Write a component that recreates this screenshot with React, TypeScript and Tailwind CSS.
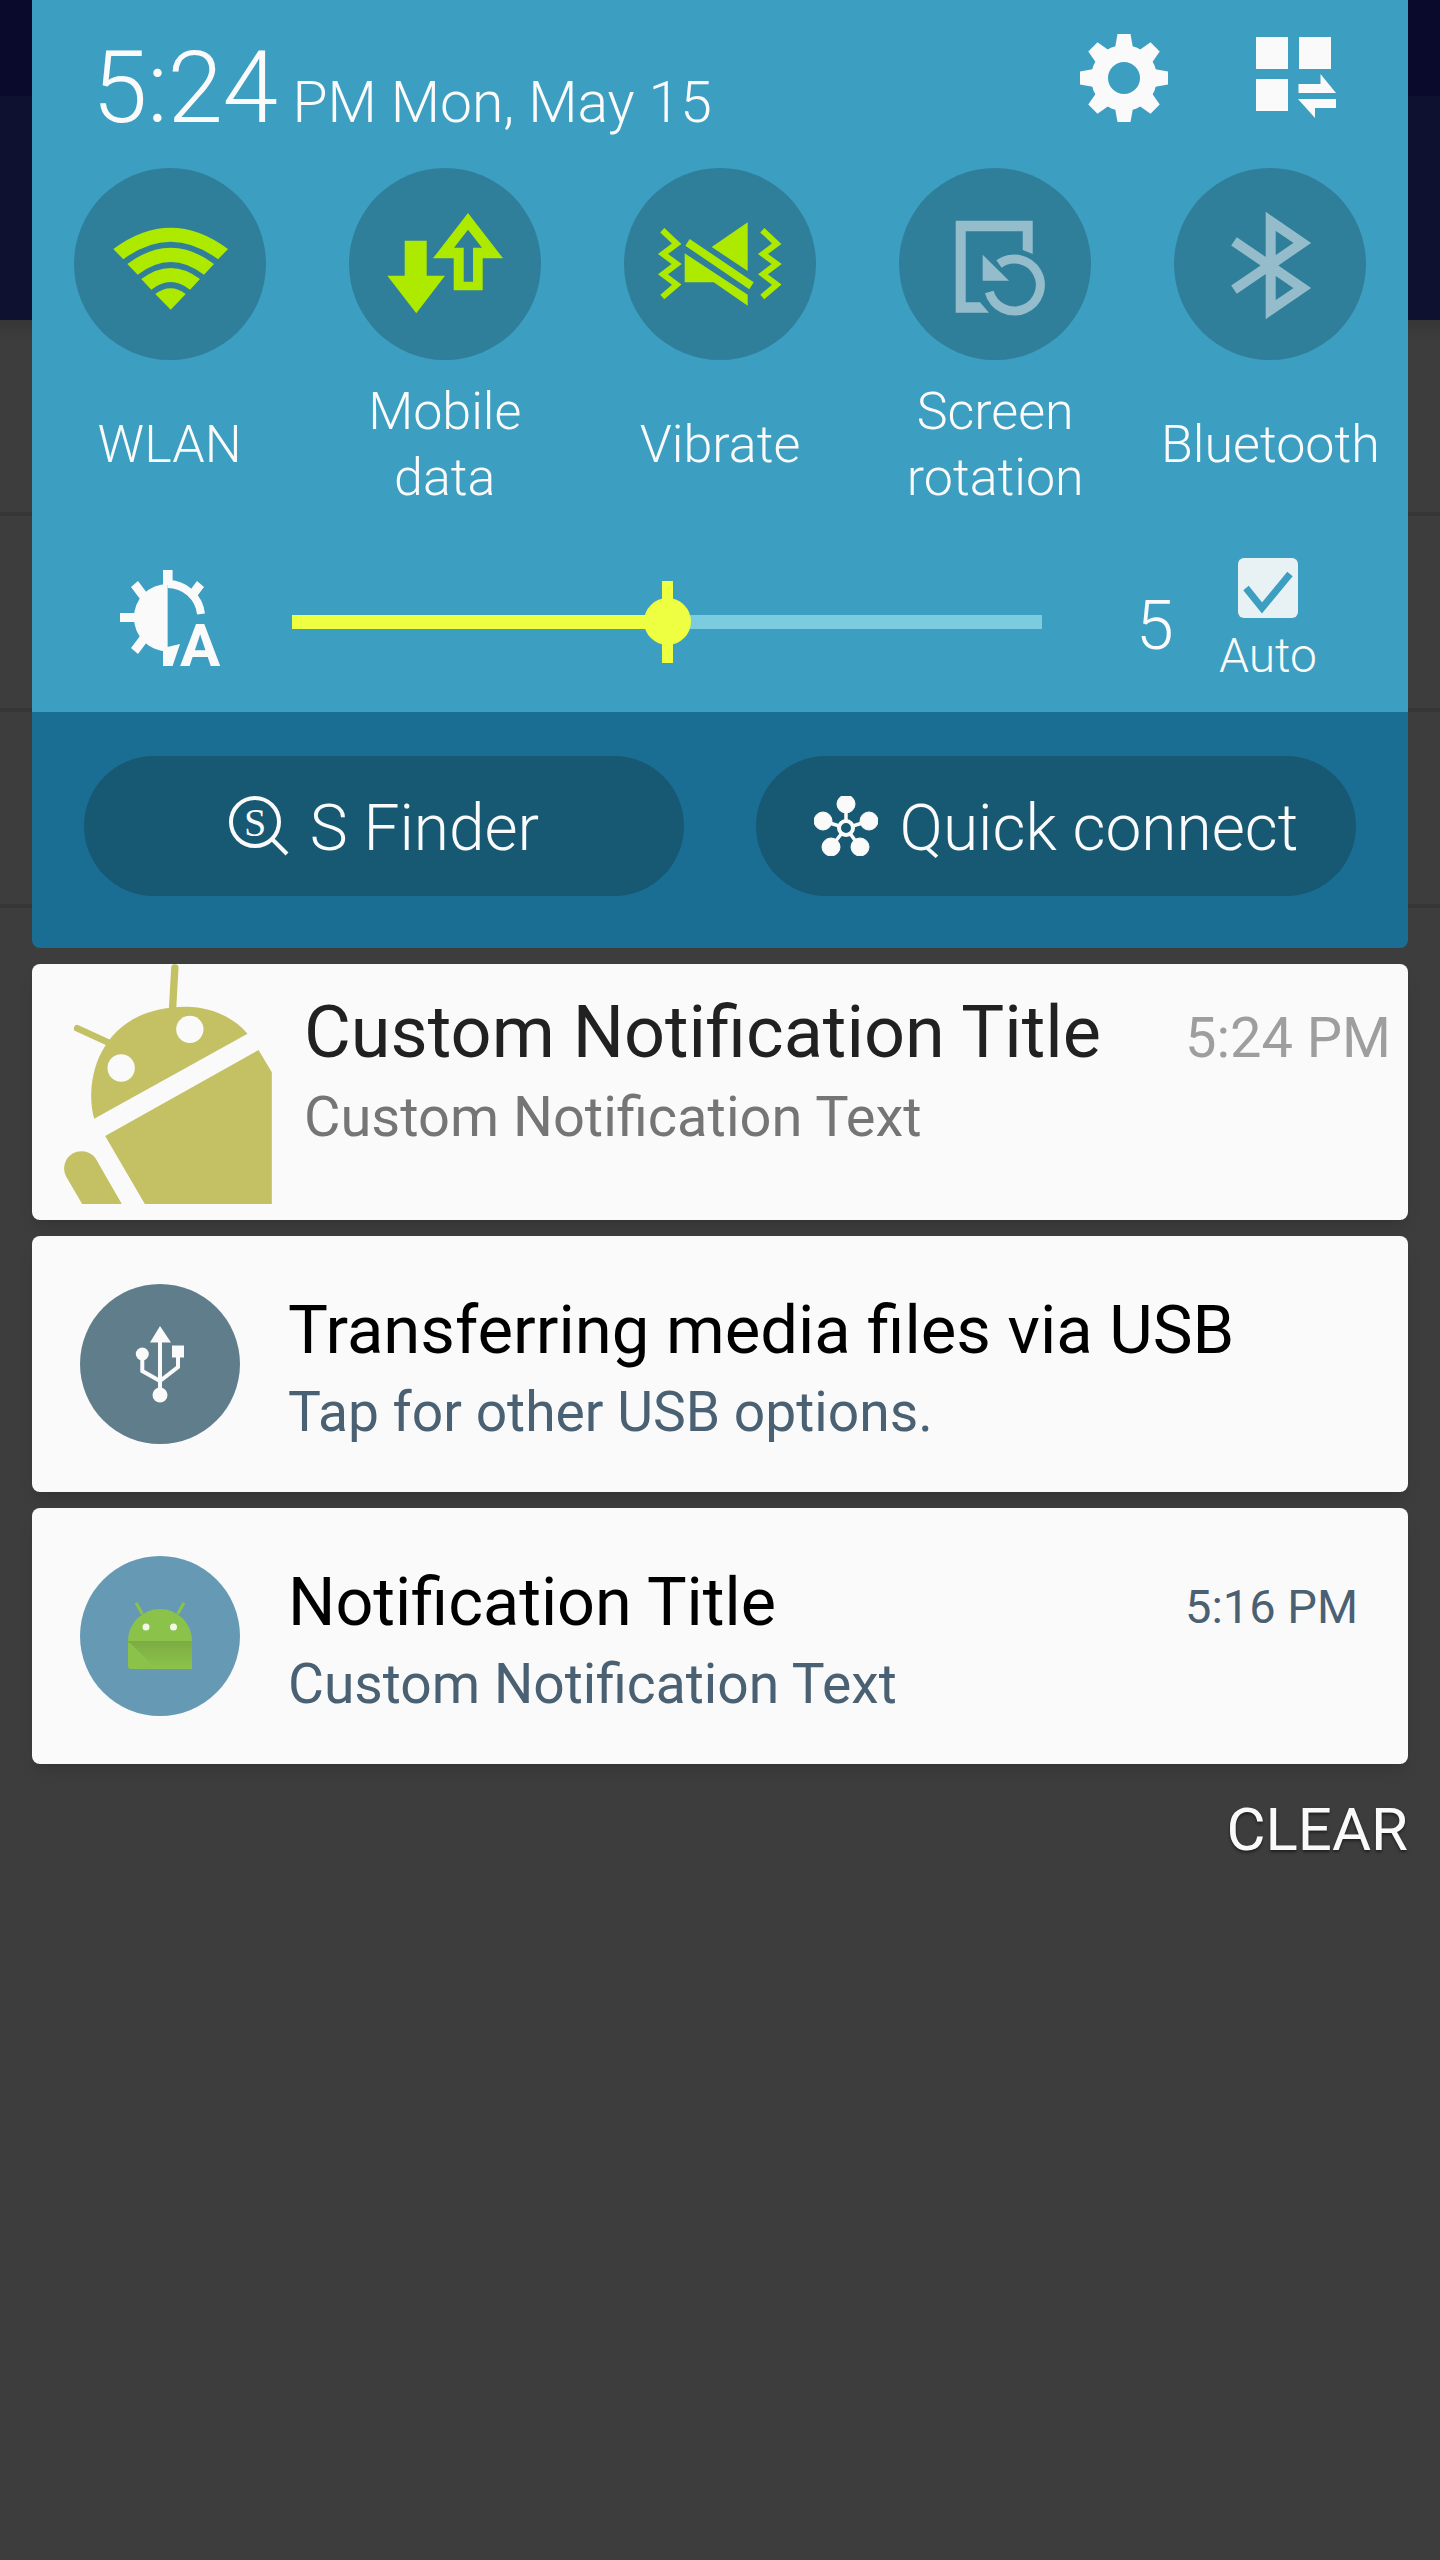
const panelFont = { fontFamily: 'Roboto, "Liberation Sans", sans-serif' }

function WifiIcon() {
  return (
    <svg viewBox="0 0 192 192" className="w-48 h-48" fill="#aeea00">
      <path d="M39.3 81Q96.7 38.4 154 81L144 91.3Q96.7 56 49.3 91.3Z" />
      <path d="M53.3 96Q96.7 63.4 140 96L130 106.7Q96.7 81.3 63.7 106.7Z" />
      <path d="M67.3 111Q96.7 89 126 111L116 121.7Q96.7 106.3 77.3 121.7Z" />
      <path d="M81.3 126Q96.7 114.6 111.7 126L96.7 141.7Z" />
    </svg>
  )
}

function DataIcon() {
  return (
    <svg viewBox="0 0 192 192" className="w-48 h-48" fill="#aeea00">
      <path d="M55.7 72.7H77.7V107.7H96L67.3 145.3L38.3 107.7H55.7Z" />
      <path
        fillRule="evenodd"
        d="M119 45L154 90.3H133.7V122.3H104.7V90.3H84ZM119 61.7L105 79.7H114.7V113.7H124V79.7H133Z"
      />
    </svg>
  )
}

function VibrateIcon() {
  return (
    <svg viewBox="0 0 192 192" className="w-48 h-48" fill="#aeea00">
      <polyline
        points="38.3,62.3 52.7,75.7 39,86 52.7,96 39,106.3 52.7,116.7 38.3,129"
        fill="none"
        stroke="#aeea00"
        strokeWidth="6"
      />
      <polyline
        points="138.3,62.3 152.7,75.7 139,86 152.7,96 139,106.3 152.7,116.7 138.3,129"
        fill="none"
        stroke="#aeea00"
        strokeWidth="6"
      />
      <path d="M87.7 79L123.7 54.3V103Z" />
      <path d="M65.7 71L129.7 114.3L125.3 121.3L61.3 77.7Z" />
      <path d="M60.7 85.3L123.7 126.7V137.7L89.7 114.3H60.7Z" />
    </svg>
  )
}

function RotationIcon() {
  return (
    <svg viewBox="0 0 192 192" className="w-48 h-48" fill="#95bccb">
      <path d="M56.7 52.7H133.7V86L123.7 82V63.3H66.7V134.3H81L90 144.7H56.7Z" />
      <path d="M83.7 86.7L110 112.7H83.7Z" />
      <path d="M100 96A26 26 0 1 1 90.3 124" fill="none" stroke="#95bccb" strokeWidth="9" />
    </svg>
  )
}

function BluetoothIcon() {
  return (
    <svg viewBox="0 0 192 192" className="w-48 h-48">
      <polyline
        points="60,73.3 128.3,120 96.7,141.7 96.7,53.3 128.3,75 60,121.7"
        fill="none"
        stroke="#95bccb"
        strokeWidth="10"
        strokeMiterlimit="8"
      />
    </svg>
  )
}

function GearIcon() {
  const angles = [0, 45, 90, 135, 180, 225, 270, 315]
  return (
    <svg viewBox="0 0 88 88" className="w-[88px] h-[88px]" fill="#fafafa">
      <path
        fillRule="evenodd"
        d="M44 11a33 33 0 1 0 0 66a33 33 0 1 0 0-66ZM44 28a16 16 0 1 1 0 32a16 16 0 1 1 0-32Z"
      />
      {angles.map((a) => (
        <path key={a} d="M37.5 0H50.5L53 14H35Z" transform={`rotate(${a} 44 44)`} />
      ))}
    </svg>
  )
}

function GridSwapIcon() {
  return (
    <svg viewBox="0 0 80 81" className="w-20 h-[81px]" fill="#fafafa">
      <rect x="0" y="0" width="32" height="32" />
      <rect x="43" y="0" width="32" height="32" />
      <rect x="0" y="42" width="32" height="32" />
      <path d="M64.5 37L80 56H42.5V47H64.5Z" />
      <path d="M42 62H80V71H59V81Z" />
    </svg>
  )
}

function BrightnessIcon() {
  return (
    <svg viewBox="0 0 101 96" className="w-[101px] h-24 overflow-visible" fill="#fafafa">
      <path d="M47.6 14A33.6 33.6 0 0 0 47.6 81.4Z" />
      <path d="M47.6 14A33.6 33.6 0 0 1 81 44" fill="none" stroke="#fafafa" strokeWidth="8" />
      <rect x="43" y="0" width="9.6" height="15" />
      <rect x="0" y="43" width="15" height="9" />
      <path d="M11 17L18 11L27 23L20 29Z" />
      <path d="M84 17L77 11L68 23L75 29Z" />
      <path d="M11 78L18 84L27 72L20 66Z" />
      <path d="M43 78L60 74L52.6 96H43Z" />
      <text x="60" y="96" fontSize="60" fontWeight="700" style={panelFont}>
        A
      </text>
    </svg>
  )
}

function SearchIcon() {
  return (
    <svg viewBox="0 0 60 60" className="w-[60px] h-[60px]" fill="none" stroke="#fafafa">
      <circle cx="26" cy="26" r="24" strokeWidth="4" />
      <line x1="44" y1="44" x2="58" y2="58" strokeWidth="4" />
      <text
        x="26"
        y="40"
        fontSize="40"
        textAnchor="middle"
        fill="#fafafa"
        stroke="none"
        style={{ fontFamily: '"Liberation Serif", serif' }}
      >
        S
      </text>
    </svg>
  )
}

function ConnectIcon() {
  return (
    <svg viewBox="0 0 64 60" className="w-16 h-[60px]" fill="#fafafa" stroke="#fafafa">
      <g strokeWidth="3.5">
        <line x1="32" y1="32" x2="32" y2="8" />
        <line x1="32" y1="32" x2="9" y2="25" />
        <line x1="32" y1="32" x2="55" y2="25" />
        <line x1="32" y1="32" x2="17" y2="51" />
        <line x1="32" y1="32" x2="46" y2="51" />
      </g>
      <circle cx="32" cy="8" r="9" />
      <circle cx="9" cy="25" r="9" />
      <circle cx="55" cy="25" r="9" />
      <circle cx="17" cy="51" r="9" />
      <circle cx="46" cy="51" r="9" />
      <circle cx="32" cy="32" r="7" fill="#175873" strokeWidth="4" />
    </svg>
  )
}

function AndroidBig() {
  return (
    <svg viewBox="190 72 626 720" className="w-[209px] h-60 shrink-0" fill="#c4c064">
      <path d="M283 536C250 420 300 200 560 200C630 200 700 230 743 281Z" />
      <line x1="232" y1="265" x2="322" y2="306" stroke="#c4c064" strokeWidth="20" strokeLinecap="round" />
      <line x1="525" y1="84" x2="518" y2="210" stroke="#c4c064" strokeWidth="22" strokeLinecap="round" />
      <circle cx="364" cy="384" r="41" fill="#fafafa" />
      <circle cx="570" cy="268" r="41" fill="#fafafa" />
      <path d="M776 330L816 397V792H435L316 588Z" />
      <path d="M247 792L198 708A52 52 0 0 1 287 655L366 792Z" />
    </svg>
  )
}

function UsbIcon() {
  return (
    <svg viewBox="0 0 160 160" className="w-40 h-40">
      <g fill="none" stroke="#fafafa" strokeWidth="4">
        <line x1="80" y1="56" x2="80" y2="108" />
        <polyline points="62.3,72 62.3,87 80,97" />
        <polyline points="98,70 98,83 80,97" />
      </g>
      <g fill="#fafafa">
        <path d="M80 42L91 58.5H70Z" />
        <circle cx="80" cy="111" r="7.5" />
        <circle cx="62.3" cy="70" r="6.5" />
        <rect x="92" y="61.5" width="12" height="12" />
      </g>
    </svg>
  )
}

function AndroidSmall() {
  return (
    <svg viewBox="0 0 160 160" className="w-40 h-40">
      <defs>
        <linearGradient id="fold" x1="0" y1="0" x2="0" y2="1">
          <stop offset="0" stopColor="#7dac43" />
          <stop offset="1" stopColor="#8bc34a" />
        </linearGradient>
      </defs>
      <line x1="56" y1="46.7" x2="62.3" y2="58" stroke="#8bc34a" strokeWidth="3" />
      <line x1="104" y1="46.7" x2="97.7" y2="58" stroke="#8bc34a" strokeWidth="3" />
      <path d="M48 85A32 32 0 0 1 112 85V110A3 3 0 0 1 109 113H51A3 3 0 0 1 48 110Z" fill="#8bc34a" />
      <path d="M48 85H112V113H76Z" fill="url(#fold)" />
      <rect x="48" y="85" width="64" height="2" fill="#7dac43" />
      <circle cx="66" cy="71" r="3.5" fill="#f1f8e9" />
      <circle cx="93.5" cy="71" r="3.5" fill="#f1f8e9" />
    </svg>
  )
}

const tiles = [
  { label: ['WLAN'], icon: <WifiIcon /> },
  { label: ['Mobile', 'data'], icon: <DataIcon /> },
  { label: ['Vibrate'], icon: <VibrateIcon /> },
  { label: ['Screen', 'rotation'], icon: <RotationIcon /> },
  { label: ['Bluetooth'], icon: <BluetoothIcon /> },
]

export default function App() {
  return (
    <div className="relative w-[1440px] h-[2560px] overflow-hidden bg-[#3d3d3d]" style={panelFont}>
      {/* app behind the shade */}
      <div className="h-24 bg-[#0a0a2c]" />
      <div className="h-56 bg-[#0e1230]" />
      <div className="h-[196px] border-b-4 border-[#363636] bg-gradient-to-b from-[#363636] to-[#3d3d3d] to-[10%]" />
      <div className="h-[196px] border-b-4 border-[#363636]" />
      <div className="h-[196px] border-b-4 border-[#363636]" />

      <div className="absolute inset-0 px-8 flex flex-col">
        {/* quick panel */}
        <div className="h-[948px] shrink-0 rounded-b-lg overflow-hidden flex flex-col">
          <div className="h-[712px] shrink-0 bg-[#3c9ec0] flex flex-col">
            <div className="h-[168px] shrink-0 relative flex items-start">
              <div className="ml-[60px] mt-[23px] flex items-baseline text-[#fafafa] font-light">
                <span className="text-[100px] leading-[130px] tracking-[-0.5px]">5:24</span>
                <span className="ml-[15px] text-[57px]">PM Mon, May 15</span>
              </div>
              <div className="absolute left-[1048px] top-[34px]">
                <GearIcon />
              </div>
              <div className="absolute left-[1224px] top-[37px]">
                <GridSwapIcon />
              </div>
            </div>

            <div className="grid grid-cols-5 h-[340px] shrink-0">
              {tiles.map((t) => (
                <div key={t.label[0]} className="flex flex-col items-center">
                  <div className="w-48 h-48 rounded-full bg-[#2f7f9b] shrink-0">{t.icon}</div>
                  <div className="h-[148px] w-full flex flex-col items-center justify-center pt-[22px] text-[52px] leading-[66px] font-light text-[#fafafa] whitespace-nowrap">
                    {t.label.map((l) => (
                      <span key={l}>{l}</span>
                    ))}
                  </div>
                </div>
              ))}
            </div>

            <div className="flex items-start flex-1">
              <div className="ml-[88px] mt-[62px] shrink-0">
                <BrightnessIcon />
              </div>
              <div className="relative ml-[71px] mt-[107px] w-[750px] h-[14px] bg-[#7bccdf] shrink-0">
                <div className="h-full w-[375px] bg-[#eeff41]" />
                <div className="absolute left-[370px] top-[-34px] w-[11px] h-[82px] bg-[#eeff41]" />
                <div className="absolute left-[352px] top-[-17px] w-[47px] h-[47px] rounded-full bg-[#eeff41]" />
              </div>
              <div className="ml-[94px] mt-[72px] w-[36px] text-[68px] leading-[92px] font-light text-[#fafafa] shrink-0">5</div>
              <div className="ml-[46px] mt-[50px] w-[100px] flex flex-col items-center shrink-0">
                <div className="w-[60px] h-[60px] rounded-md bg-[#e8f1f4] flex items-center justify-center">
                  <svg viewBox="0 0 60 60" className="w-[60px] h-[60px]">
                    <polyline points="8,30 24,50 52,16" fill="none" stroke="#3c9ec0" strokeWidth="7" />
                  </svg>
                </div>
                <span className="mt-[10px] text-[48px] leading-[56px] font-light text-[#fafafa]">Auto</span>
              </div>
            </div>
          </div>

          <div className="flex-1 bg-[#1b6e93] flex items-start gap-[72px] px-[52px] pt-[44px]">
            <div className="w-[600px] h-[140px] rounded-[70px] bg-[#175873] flex items-center justify-center gap-[21px] text-[64px] font-light text-[#fafafa]">
              <SearchIcon />
              <span className="mt-[6px]">S Finder</span>
            </div>
            <div className="w-[600px] h-[140px] rounded-[70px] bg-[#175873] flex items-center justify-center gap-[22px] text-[64px] font-light text-[#fafafa]">
              <ConnectIcon />
              <span className="mt-[6px]">Quick connect</span>
            </div>
          </div>
        </div>

        {/* notifications */}
        <div className="mt-4 flex flex-col gap-4">
          <div className="h-64 rounded-lg bg-[#fafafa] shadow-lg flex">
            <div className="ml-[31px] shrink-0">
              <AndroidBig />
            </div>
            <div className="ml-[32px] flex-1 relative">
              <div className="mt-[27px] text-[72px] leading-[84px] text-[#212121]">Custom Notification Title</div>
              <div className="mt-[10px] text-[56px] leading-[64px] text-[#757575]">Custom Notification Text</div>
              <div className="absolute right-[17px] top-[42px] text-[56px] leading-[64px] text-[#9e9e9e]">5:24 PM</div>
            </div>
          </div>

          <div className="h-64 rounded-lg bg-[#fafafa] shadow-lg flex items-center">
            <div className="ml-12 w-40 h-40 rounded-full bg-[#607d8b] shrink-0">
              <UsbIcon />
            </div>
            <div className="ml-[48px] mt-[4px]">
              <div className="text-[67px] leading-[82px] text-black">Transferring media files via USB</div>
              <div className="mt-[10px] text-[55.2px] leading-[62px] text-[#4a6073]">Tap for other USB options.</div>
            </div>
          </div>

          <div className="h-64 rounded-lg bg-[#fafafa] shadow-lg flex items-center relative">
            <div className="ml-12 w-40 h-40 rounded-full bg-[#6699b3] shrink-0">
              <AndroidSmall />
            </div>
            <div className="ml-[48px] mt-[4px]">
              <div className="text-[66.5px] leading-[82px] text-black">Notification Title</div>
              <div className="mt-[10px] text-[55.2px] leading-[62px] text-[#4a6073]">Custom Notification Text</div>
            </div>
            <div className="absolute right-[50px] top-[67px] text-[47px] leading-[64px] text-[#4a6073]">5:16 PM</div>
          </div>
        </div>

        <div className="mt-[32px] self-end text-[60px] leading-[68px] text-[#fafafa] [text-shadow:0_2px_3px_rgba(0,0,0,0.5)]">
          CLEAR
        </div>
      </div>
    </div>
  )
}
